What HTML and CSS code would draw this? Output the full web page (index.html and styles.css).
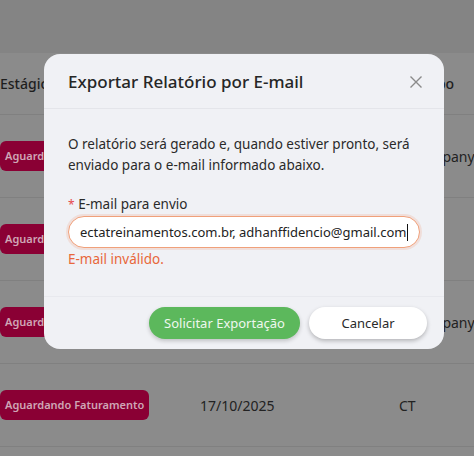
FILE: index.html
```html
<!DOCTYPE html>
<html lang="pt-BR">
<head>
<meta charset="utf-8">
<title>Exportar Relatório</title>
<link rel="stylesheet" href="styles.css">
</head>
<body>
<div class="page">
  <div class="topband"></div>
  <div class="table">
    <div class="row head">
      <div class="cell">Estágio</div>
      <div class="cell"></div>
      <div class="cell"></div>
      <div class="cell">Grupo</div>
    </div>
    <div class="row">
      <div class="cell"><span class="badge">Aguardando Faturamento</span></div>
      <div class="cell">17/10/2025</div>
      <div class="cell"></div>
      <div class="cell">Company</div>
    </div>
    <div class="row">
      <div class="cell"><span class="badge">Aguardando Faturamento</span></div>
      <div class="cell">17/10/2025</div>
      <div class="cell">CT</div>
      <div class="cell"></div>
    </div>
    <div class="row">
      <div class="cell"><span class="badge">Aguardando Faturamento</span></div>
      <div class="cell">17/10/2025</div>
      <div class="cell"></div>
      <div class="cell">Company</div>
    </div>
    <div class="row">
      <div class="cell"><span class="badge">Aguardando Faturamento</span></div>
      <div class="cell">17/10/2025</div>
      <div class="cell">CT</div>
      <div class="cell"></div>
    </div>
  </div>

  <div class="modal">
    <div class="modal-header">
      <h2 class="modal-title">Exportar Relatório por E-mail</h2>
      <button class="close" aria-label="Fechar">
        <svg width="14" height="14" viewBox="0 0 14 14"><path d="M1.5 1.5 L12.5 12.5 M12.5 1.5 L1.5 12.5" stroke="#8a8a8a" stroke-width="1.4" fill="none"/></svg>
      </button>
    </div>
    <div class="modal-body">
      <p class="desc">O relatório será gerado e, quando estiver pronto, será enviado para o e-mail informado abaixo.</p>
      <label class="label"><span class="req">*</span> E-mail para envio</label>
      <div class="input"><span class="value">ectatreinamentos.com.br, adhanffidencio@gmail.com</span><span class="caret"></span></div>
      <div class="error">E-mail inválido.</div>
    </div>
    <div class="modal-footer">
      <button class="btn primary">Solicitar Exportação</button>
      <button class="btn secondary">Cancelar</button>
    </div>
  </div>
</div>
</body>
</html>
```
FILE: styles.css
```css
* { box-sizing: border-box; }
html, body { margin: 0; padding: 0; }
body {
  width: 474px;
  height: 456px;
  overflow: hidden;
  font-family: "Noto Sans", "Open Sans", sans-serif;
  background: #8c8c8c;
}
.page {
  position: relative;
  width: 474px;
  height: 456px;
  background: #8b8b8b;
}
.topband {
  height: 53px;
  background: #848484;
}
.row {
  display: grid;
  grid-template-columns: 200px 199px 13px 1fr;
  height: 83px;
  border-bottom: 1px solid #808080;
  align-items: center;
  font-size: 14px;
  color: #222;
  white-space: nowrap;
  overflow: hidden;
}
.cell { overflow: visible; }
.row.head {
  height: 62px;
  font-weight: 500;
  color: #1e1e1e;
}
.badge {
  display: inline-block;
  background: #8a0034;
  color: #cfa6b6;
  font-size: 11px;
  font-weight: 600;
  height: 30px;
  line-height: 30px;
  padding: 0 5px;
  border-radius: 6px;
}
.modal {
  position: absolute;
  left: 44px;
  top: 54px;
  width: 400px;
  background: #f0f1f5;
  border-radius: 16px;
  display: flex;
  flex-direction: column;
}
.modal-header {
  display: flex;
  align-items: center;
  justify-content: space-between;
  padding: 16px 20px 14px 24px;
  border-bottom: 1px solid #e4e5ea;
}
.modal-title {
  margin: 0;
  font-size: 17px;
  line-height: 24px;
  font-weight: 500;
  color: #262626;
}
.close {
  border: 0;
  background: none;
  padding: 0;
  width: 16px;
  height: 16px;
  display: flex;
  align-items: center;
  justify-content: center;
}
.modal-body {
  padding: 25px 24px 0 24px;
  display: flex;
  flex-direction: column;
}
.desc {
  margin: 0 0 18px;
  font-size: 13.5px;
  line-height: 21px;
  color: #2a2a2a;
}
.label {
  font-size: 13.5px;
  line-height: 20px;
  color: #2a2a2a;
  margin-bottom: 1px;
}
.req { color: #e5484d; font-size: 12px; }
.input {
  height: 32px;
  border: 1px solid #f0a07a;
  border-radius: 16px;
  background: #fff;
  box-shadow: 0 0 0 2px rgba(240, 150, 110, 0.2);
  display: flex;
  align-items: center;
  padding: 0 11px;
  font-size: 13px;
  color: #222;
  white-space: nowrap;
  overflow: hidden;
}
.caret {
  display: inline-block;
  width: 1px;
  height: 17px;
  background: #111;
  margin-left: 1px;
}
.error {
  font-size: 13.5px;
  line-height: 22px;
  color: #e8673a;
}
.modal-footer {
  margin-top: 26px;
  border-top: 1px solid #e8e9ee;
  padding: 10px 17px 10px 24px;
  display: flex;
  justify-content: flex-end;
  gap: 9px;
}
.btn {
  height: 32px;
  border-radius: 16px;
  font-family: inherit;
  font-size: 13px;
  border: 0;
  padding: 0;
  white-space: nowrap;
}
.primary {
  width: 151px;
  background: #5cb85c;
  color: #eef7ee;
  box-shadow: 0 2px 4px rgba(0, 0, 0, 0.2);
}
.secondary {
  width: 118px;
  background: #fff;
  color: #2a2a2a;
  box-shadow: 0 2px 4px rgba(0, 0, 0, 0.25);
}
```
